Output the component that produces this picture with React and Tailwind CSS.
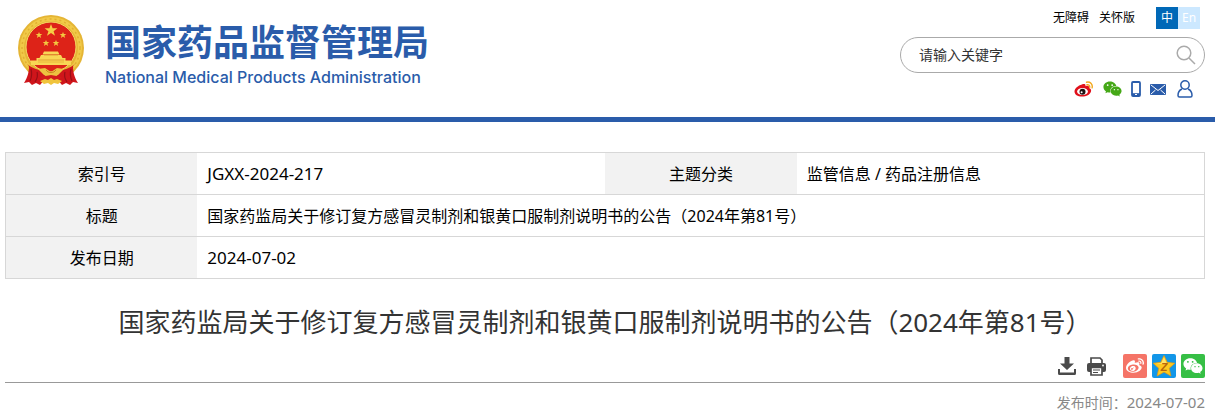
import React, { useState } from 'react';
import { FaWeibo, FaWeixin } from 'react-icons/fa';

const TITLE = '国家药监局关于修订复方感冒灵制剂和银黄口服制剂说明书的公告（2024年第81号）';

const Emblem = () => (
  <svg viewBox="0 0 66 71" className="w-[66px] h-[71px] shrink-0" aria-hidden="true">
    <circle cx="33" cy="33" r="33" fill="#e5b535" />
    <circle cx="33" cy="33" r="29" fill="none" stroke="#f1ca48" strokeWidth="4" />
    <circle cx="33" cy="33" r="29" fill="none" stroke="#e2af33" strokeWidth="1.500" strokeDasharray="2 3" />
    <circle cx="33" cy="32" r="25" fill="#dd2318" stroke="#f5d863" strokeWidth="1" />
    <path d="M33 9l1.600 4.300h4.800l-3.800 2.900 1.400 4.600-4-2.800-4 2.800 1.400-4.600-3.800-2.900h4.800z" fill="#f6cf45" />
    <g fill="#f3c840">
      <path id="small-star" d="M21 17l.9 2.100h2.400l-1.900 1.500.7 2.300-2.100-1.400-2.100 1.400.7-2.300-1.900-1.500h2.400z" />
      <use href="#small-star" x="24" />
      <use href="#small-star" x="7" y="8" />
      <use href="#small-star" x="17" y="8" />
    </g>
    <path d="M26 36.500h14l1.500 3h-17zM23 40h20l1.500 3h3v2.500h5.500v4.500H13v-4.500h5.500V43h3z" fill="#f8d755" />
    <path d="M26 40h14M20 45h26" stroke="#d9962b" strokeWidth=".8" />
    <path d="M20 47h26" stroke="#e7ad35" strokeWidth=".8" />
    <path d="M9 49c5 4 11 6 17 7l2 7-6 7-4-2-4 2-3-3-5 1c4-6 5-12 5-17zM57 49c-5 4-11 6-17 7l-2 7 6 7 4-2 4 2 3-3 5 1c-4-6-5-12-5-17z" fill="#cf151b" />
    <path d="M13 54c1 4 1 8-1 12M19 57c1 3 0 7-2 10M53 54c-1 4-1 8 1 12M47 57c-1 3 0 7 2 10" stroke="#980f15" strokeWidth="1.200" fill="none" />
    <path d="M20 54l7-1 6 4 6-4 7 1-6 6-7 3-7-3z" fill="#edc140" />
    <path d="M22 62l11-2 11 2-4 4H26z" fill="#d21b1b" />
    <path d="M22 66l5-2 3 1 3-2 3 2 3-1 5 2-4 3-4-1-3 2-3-2-4 1z" fill="#f0c43c" />
    <path d="M28 55a5.500 4.500 0 0010 0" stroke="#c98a22" strokeWidth="1" fill="none" />
  </svg>
);

const WeiboIcon = () => (
  <svg viewBox="0 0 20 16" className="w-5 h-4">
    <path d="M8 3.500c2-.8 4-.5 3.500 1.700 2-.7 4-.4 3.500 1.800 1.500.6 2.500 1.600 2 3.500-.8 3-4.500 5-9 5-4.500 0-7.500-2-7.500-5 0-2.800 3.500-6 7.500-7z" fill="#e0101b" />
    <ellipse cx="8.500" cy="10.500" rx="5.400" ry="3.600" fill="#fff" />
    <circle cx="8.500" cy="10.700" r="3" fill="#1d1112" />
    <circle cx="7.600" cy="11.300" r="1" fill="#fff" />
    <path d="M12.500 1.200c3.500-.8 6.500 1.800 5.600 5.600M13 3.700c1.700-.3 3 .9 2.700 2.600" fill="none" stroke="#f2a71b" strokeWidth="1.400" strokeLinecap="round" />
  </svg>
);

const PhoneIcon = () => (
  <svg viewBox="0 0 10 16" className="w-[10px] h-4">
    <rect x="1" y="1" width="8" height="14" rx="1" fill="#fff" stroke="#2a5caa" strokeWidth="1.800" />
    <path d="M1 13.500h8" stroke="#2a5caa" strokeWidth="2.600" />
    <path d="M4 13.500h2" stroke="#fff" strokeWidth="1.200" />
  </svg>
);

const MailIcon = () => (
  <svg viewBox="0 0 16 11" className="w-4 h-[11px]">
    <rect width="16" height="11" rx="1" fill="#2a5caa" />
    <path d="M1 1l7 5.500L15 1M1 10l4.500-4M15 10l-4.500-4" fill="none" stroke="#fff" strokeWidth="1" />
  </svg>
);

const UserIcon = () => (
  <svg viewBox="0 0 16 18" className="w-4 h-[18px]" fill="none" stroke="#2a5caa" strokeWidth="1.500">
    <circle cx="8" cy="5" r="4.200" />
    <path d="M5 9C2.500 10 1 12.500 1 15.500Q1 17 2.500 17h11Q15 17 15 15.500C15 12.500 13.500 10 11 9" />
  </svg>
);

const SearchIcon = () => (
  <svg viewBox="0 0 20 20" className="w-5 h-5" fill="none" stroke="#aaa" strokeWidth="1.500">
    <circle cx="8" cy="8" r="6.800" />
    <path d="M13 13l6 6" />
  </svg>
);

const DownloadIcon = () => (
  <svg viewBox="0 0 18 18" className="w-[18px] h-[18px]" fill="#4a4a4a">
    <path d="M6.500 0h5v6.500H16L9 13 2 6.500h4.500z" />
    <path d="M0 12h2v3.500h14V12h2v4.500Q18 18 16.500 18h-15Q0 18 0 16.500z" />
  </svg>
);

const PrintIcon = () => (
  <svg viewBox="0 0 19 19" className="w-[19px] h-[19px]">
    <path d="M4 6V1h9l2 2v3" fill="#fff" stroke="#4a4a4a" strokeWidth="1.700" />
    <rect y="6" width="19" height="9" rx="2" fill="#4a4a4a" />
    <path d="M4 10.500h11V18H4z" fill="#fff" stroke="#4a4a4a" strokeWidth="1.700" />
    <path d="M6 13h7M6 15.500h5" stroke="#4a4a4a" strokeWidth="1.200" />
    <circle cx="16" cy="8.500" r=".9" fill="#fff" />
  </svg>
);

const QzoneIcon = () => (
  <svg viewBox="0 0 24 24" className="w-6 h-6">
    <path d="M12 1.500l3.200 6.800 7.600.9-5.600 5.100 1.700 7.700-6.900-3.900L5.100 22l1.700-7.700L1.200 9.200l7.600-.9z" fill="#ffc91f" stroke="#e99a0c" strokeWidth=".7" strokeLinejoin="round" />
    <path d="M12 3l2.500 6-5 1-6-.3 5.700-.8z" fill="#ffe36b" />
    <text x="12" y="16.500" textAnchor="middle" fontSize="11" fontWeight="700" fontStyle="italic" fontFamily="Liberation Sans, sans-serif" fill="#b8650b">Z</text>
  </svg>
);

const labelCell = 'bg-[#f2f2f2] font-normal text-center border-y border-[#d7d7d7]';
const valueCell = 'pl-[10px] border-y border-[#d7d7d7]';

const App = () => {
  const [keyword, setKeyword] = useState('');

  return (
    <div className="min-h-screen bg-white text-black font-['Noto_Sans','Noto_Sans_CJK_SC',sans-serif]">
      {/* HEADER */}
      <header className="flex justify-between h-[122px] border-b-[5px] border-[#2a5caa] pl-[18px] pr-[10px]">
        <a href="#" className="flex items-start gap-[21px] pt-[15px] text-[#2a5caa]">
          <Emblem />
          <span className="flex flex-col pt-2">
            <span className="text-[36px] leading-[40px] font-bold">国家药品监督管理局</span>
            <span className="text-base leading-[28px] font-medium font-[Inter,sans-serif]">National Medical Products Administration</span>
          </span>
        </a>

        <div className="flex flex-col items-end w-[305px] pt-[7px]">
          <nav className="flex items-center gap-[10px] text-xs mr-[5px]">
            <a href="#">无障碍</a>
            <a href="#">关怀版</a>
            <span className="flex ml-[11px] text-white leading-[22px] text-center">
              <a href="#" className="w-[22px] bg-[#0068b7]">中</a>
              <a href="#" className="w-[22px] bg-[#cce8ff]">En</a>
            </span>
          </nav>

          <form onSubmit={(e) => e.preventDefault()} className="flex items-center w-full h-9 mt-2 pl-[18px] pr-2 border border-[#aaa] rounded-full">
            <input
              type="text"
              aria-label="请输入关键字"
              placeholder="请输入关键字"
              value={keyword}
              onChange={(e) => setKeyword(e.target.value)}
              className="flex-1 min-w-0 text-sm outline-none placeholder:text-[#333]"
            />
            <button type="submit" aria-label="搜索"><SearchIcon /></button>
          </form>

          <div className="flex items-center gap-[9px] h-[18px] mt-[7px] mr-3">
            <a href="#" aria-label="微博"><WeiboIcon /></a>
            <a href="#" aria-label="微信"><FaWeixin className="w-[19px] h-[18px] text-[#45a817]" /></a>
            <a href="#" aria-label="手机版"><PhoneIcon /></a>
            <a href="#" aria-label="邮箱"><MailIcon /></a>
            <a href="#" aria-label="个人中心" className="ml-[2px]"><UserIcon /></a>
          </div>
        </div>
      </header>

      <main className="pt-[30px] pl-[5px] pr-[10px]">
        {/* INDEX TABLE */}
        <table className="w-full table-fixed border-collapse border border-[#d7d7d7] text-base">
          <colgroup>
            <col className="w-[16%]" />
            <col className="w-[34%]" />
            <col className="w-[16%]" />
            <col className="w-[34%]" />
          </colgroup>
          <tbody>
            <tr className="h-[42px]">
              <th scope="row" className={labelCell}>索引号</th>
              <td className={valueCell}><span className="text-[17px] leading-6">JGXX-2024-217</span></td>
              <th scope="row" className={labelCell}>主题分类</th>
              <td className={valueCell}>监管信息 / 药品注册信息</td>
            </tr>
            <tr className="h-[42px]">
              <th scope="row" className={labelCell}>标题</th>
              <td colSpan={3} className={valueCell}>{TITLE}</td>
            </tr>
            <tr className="h-[42px]">
              <th scope="row" className={labelCell}>发布日期</th>
              <td colSpan={3} className={valueCell}><span className="text-[17px] leading-6">2024-07-02</span></td>
            </tr>
          </tbody>
        </table>

        {/* ARTICLE */}
        <h1 className="mt-6 text-[26px] leading-[38px] text-center text-[#333]">{TITLE}</h1>

        <div className="flex items-center justify-end h-6 mt-[13px]">
          <button type="button" aria-label="下载" className="mr-[11px]"><DownloadIcon /></button>
          <button type="button" aria-label="打印" className="mr-[17px]"><PrintIcon /></button>
          <div className="flex gap-[5px] text-white">
            <a href="#" aria-label="分享到微博" className="flex items-center justify-center w-6 h-6 rounded-[2px] bg-[#f57467]"><FaWeibo className="w-[18px] h-[18px]" /></a>
            <a href="#" aria-label="分享到QQ空间" className="w-6 h-6 rounded-[2px] bg-[#1296e8]"><QzoneIcon /></a>
            <a href="#" aria-label="分享到微信" className="flex items-center justify-center w-6 h-6 rounded-[2px] bg-[#36bf45]"><FaWeixin className="w-5 h-5" /></a>
          </div>
        </div>

        <p className="mt-1 pt-2 border-t border-[#999] text-sm leading-[22px] text-right text-[#888]">
          发布时间：<span className="text-[15px]">2024-07-02</span>
        </p>
      </main>
    </div>
  );
};

export default App;
